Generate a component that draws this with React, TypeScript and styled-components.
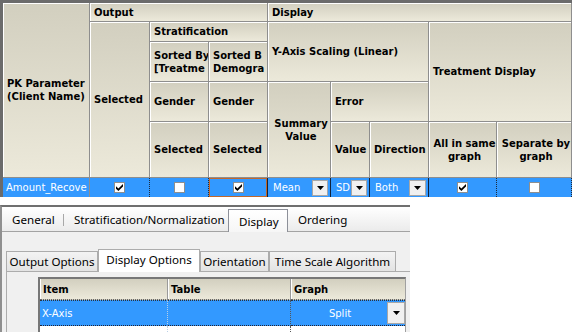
import React from 'react';
import styled, { createGlobalStyle } from 'styled-components';

const Global = createGlobalStyle`
  html, body { margin: 0; padding: 0; background: #fff; overflow: hidden; }
  #root { width: 572px; height: 332px; }
`;

const Page = styled.div`
  width: 572px;
  height: 332px;
  overflow: hidden;
  display: flex;
  flex-direction: column;
  background: #fff;
`;

/* ---------- top grid ---------- */
const TopGrid = styled.div`
  display: grid;
  grid-template-columns: 87px 60px 59px 59px 63px 39px 59px 68px 75px;
  grid-template-rows: 19px 20px 40px 40px 56px 19px;
  border-top: 3px solid #6b6b6b;
  border-left: 3px solid #6b6b6b;
  font-family: "DejaVu Sans", Verdana, sans-serif;
  font-size: 10px;
  flex: none;
`;

const HeadCell = styled.div<{ $col: string; $row: string; $center?: boolean }>`
  grid-column: ${p => p.$col};
  grid-row: ${p => p.$row};
  box-sizing: border-box;
  min-width: 0;
  background: linear-gradient(#d2cfbf, #ece9da);
  border-right: 1px solid #8e8e8e;
  border-bottom: 1px solid #8e8e8e;
  box-shadow: inset 1px 1px 0 #fff;
  display: flex;
  align-items: center;
  justify-content: ${p => (p.$center ? 'center' : 'flex-start')};
  text-align: ${p => (p.$center ? 'center' : 'left')};
  padding: 0 0 0 4px;
  font-weight: bold;
  line-height: 13px;
  color: #000;
  white-space: nowrap;
  overflow: hidden;
`;

type Edge = 'gray' | 'dot' | 'solid';
const edgeStyle = (e: Edge) =>
  e === 'gray' ? '1px solid #8e8e8e' : e === 'dot' ? '1px dotted #1c2a3a' : '1px solid #10223a';

const DataCell = styled.div<{ $col: number; $edge: Edge; $center?: boolean; $focus?: boolean }>`
  grid-row: 6;
  grid-column: ${p => p.$col};
  box-sizing: border-box;
  min-width: 0;
  background: #3399ff;
  color: #fff;
  border-right: ${p => edgeStyle(p.$edge)};
  display: flex;
  align-items: center;
  justify-content: ${p => (p.$center ? 'center' : 'flex-start')};
  padding: ${p => (p.$center ? '0 2px' : '0 2px 0 5px')};
  white-space: nowrap;
  overflow: hidden;
  ${p => (p.$focus ? 'box-shadow: inset 0 0 0 1px #c2682c;' : '')}
`;

const NameCell = styled(DataCell)`
  padding-left: 3px;
`;

const Box = styled.span`
  width: 11px;
  height: 11px;
  box-sizing: border-box;
  border: 1px solid #8e8f8f;
  background: #fff;
  display: inline-flex;
  align-items: center;
  justify-content: center;
`;

const DropBtn = styled.span<{ $w: number; $h: number }>`
  width: ${p => p.$w}px;
  height: ${p => p.$h}px;
  box-sizing: border-box;
  border: 1px solid #a7a7a7;
  background: #f0f0f0;
  display: flex;
  align-items: center;
  justify-content: center;
  margin-left: auto;
  flex: none;
`;

const Check = ({ on }: { on: boolean }) => (
  <Box>
    {on && (
      <svg width="7" height="7" viewBox="0 0 7 7">
        <polygon points="0,2.3 2.4,4.6 7,0 7,2.4 2.4,7 0,4.7" fill="#000" />
      </svg>
    )}
  </Box>
);

const Arrow = () => (
  <svg width="7" height="4" viewBox="0 0 7 4">
    <polygon points="0,0 7,0 3.5,4" fill="#000" />
  </svg>
);

/* ---------- tab control ---------- */
const TabControl = styled.div`
  margin-top: 8px;
  width: 408px;
  flex: 1;
  display: flex;
  flex-direction: column;
  border-top: 2px solid #6f6f6f;
  border-left: 2px solid #8f8f8f;
  background: #f0f0f0;
  font-family: "Noto Sans", "Segoe UI", sans-serif;
  font-size: 11.6px;
  color: #000;
`;

const TabStrip = styled.div`
  height: 24px;
  display: flex;
  align-items: stretch;
  background: linear-gradient(#ffffff, #ebebeb);
  border-bottom: 1px solid #a3a3a3;
  flex: none;
`;

const Tab = styled.div<{ $w: number; $active?: boolean }>`
  width: ${p => p.$w}px;
  box-sizing: border-box;
  padding-left: 10px;
  display: flex;
  align-items: center;
  white-space: nowrap;
  ${p =>
    p.$active
      ? `margin-top: 2px; margin-bottom: -1px; border: 1px solid #8d9099; border-bottom: none; background: linear-gradient(#ffffff, #f6f6f6);`
      : ''}
`;

const TabSep = styled.span`
  width: 1px;
  height: 12px;
  align-self: center;
  margin-top: 2px;
  background: #a8a8a8;
  flex: none;
`;

const TabPanel = styled.div`
  flex: 1;
  display: flex;
  flex-direction: column;
  padding: 17px 0 0 4px;
  min-height: 0;
`;

const InnerStrip = styled.div`
  height: 22px;
  display: flex;
  align-items: flex-end;
  flex: none;
`;

const InnerTab = styled.div<{ $w: number; $active?: boolean }>`
  width: ${p => p.$w}px;
  height: ${p => (p.$active ? 23 : 20)}px;
  box-sizing: border-box;
  border: 1px solid #acacac;
  border-bottom: none;
  display: flex;
  align-items: center;
  justify-content: center;
  white-space: nowrap;
  background: ${p => (p.$active ? '#ffffff' : 'linear-gradient(#f3f3f3, #e3e3e3)')};
  margin-bottom: ${p => (p.$active ? '-1px' : '0')};
  padding-bottom: ${p => (p.$active ? 3 : 0)}px;
  z-index: ${p => (p.$active ? 1 : 0)};
`;

const InnerPanel = styled.div`
  flex: 1;
  border-top: 1px solid #acacac;
  border-left: 1px solid #acacac;
  padding: 5px 0 0 31px;
  background: #f0f0f0;
`;

const ItemGrid = styled.div`
  width: 368px;
  box-sizing: border-box;
  display: grid;
  grid-template-columns: 128px 123px 114px;
  grid-template-rows: 21px 26px 30px;
  border-top: 2px solid #777;
  border-left: 2px solid #777;
  border-right: 1px solid #a0a0a0;
  background: #fff;
  font-family: "DejaVu Sans", Verdana, sans-serif;
  font-size: 10px;
`;

const GHead = styled.div<{ $last?: boolean }>`
  background: linear-gradient(#d2cfbf, #ece9da);
  border-right: ${p => (p.$last ? 'none' : '1px solid #9a9a9a')};
  box-shadow: inset 1px 0 0 #fff;
  border-bottom: 1px dotted #6a6a6a;
  display: flex;
  align-items: center;
  padding-left: 3px;
  font-weight: bold;
  box-sizing: border-box;
`;

const GCell = styled.div<{ $sel?: boolean; $sep: 'light' | 'dark' | 'none' }>`
  box-sizing: border-box;
  background: ${p => (p.$sel ? '#3399ff' : '#fff')};
  color: #fff;
  border-right: ${p =>
    p.$sep === 'none' ? 'none' : p.$sep === 'light' ? '1px dotted #b9cfe6' : '1px dotted #555'};
  ${p => (p.$sel ? 'border-bottom: 1px dotted #223; border-top: 1px dotted #2a3340;' : '')}
  display: flex;
  align-items: center;
  padding-left: 2px;
  min-width: 0;
`;

const CellText = styled.span<{ $grow?: boolean }>`
  flex: ${p => (p.$grow ? 1 : 'none')};
  text-align: ${p => (p.$grow ? 'center' : 'left')};
`;

export default function App() {
  return (
    <Page>
      <Global />
      <TopGrid>
        <HeadCell $col="1" $row="1 / span 5">PK Parameter<br />(Client Name)</HeadCell>
        <HeadCell $col="2 / span 3" $row="1">Output</HeadCell>
        <HeadCell $col="2" $row="2 / span 4">Selected</HeadCell>
        <HeadCell $col="3 / span 2" $row="2">Stratification</HeadCell>
        <HeadCell $col="3" $row="3">Sorted By<br />[Treatme</HeadCell>
        <HeadCell $col="4" $row="3">Sorted B<br />Demogra</HeadCell>
        <HeadCell $col="3" $row="4">Gender</HeadCell>
        <HeadCell $col="4" $row="4">Gender</HeadCell>
        <HeadCell $col="3" $row="5">Selected</HeadCell>
        <HeadCell $col="4" $row="5">Selected</HeadCell>
        <HeadCell $col="5 / span 5" $row="1">Display</HeadCell>
        <HeadCell $col="5 / span 3" $row="2 / span 2">Y-Axis Scaling (Linear)</HeadCell>
        <HeadCell $col="8 / span 2" $row="2 / span 3">Treatment Display</HeadCell>
        <HeadCell $col="5" $row="4 / span 2" $center>Summary<br />Value</HeadCell>
        <HeadCell $col="6 / span 2" $row="4">Error</HeadCell>
        <HeadCell $col="6" $row="5">Value</HeadCell>
        <HeadCell $col="7" $row="5">Direction</HeadCell>
        <HeadCell $col="8" $row="5" $center>All in same<br />graph</HeadCell>
        <HeadCell $col="9" $row="5" $center>Separate by<br />graph</HeadCell>

        <NameCell $col={1} $edge="gray">Amount_Recove</NameCell>
        <DataCell $col={2} $edge="dot" $center><Check on /></DataCell>
        <DataCell $col={3} $edge="dot" $center><Check on={false} /></DataCell>
        <DataCell $col={4} $edge="solid" $center $focus><Check on /></DataCell>
        <DataCell $col={5} $edge="solid">
          <CellText>Mean</CellText>
          <DropBtn $w={16} $h={16}><Arrow /></DropBtn>
        </DataCell>
        <DataCell $col={6} $edge="solid">
          <CellText>SD</CellText>
          <DropBtn $w={16} $h={16}><Arrow /></DropBtn>
        </DataCell>
        <DataCell $col={7} $edge="solid">
          <CellText>Both</CellText>
          <DropBtn $w={17} $h={16}><Arrow /></DropBtn>
        </DataCell>
        <DataCell $col={8} $edge="dot" $center><Check on /></DataCell>
        <DataCell $col={9} $edge="dot" $center><Check on={false} /></DataCell>
      </TopGrid>

      <TabControl>
        <TabStrip>
          <Tab $w={61}>General</Tab>
          <TabSep />
          <Tab $w={164}>Stratification/Normalization</Tab>
          <Tab $w={60} $active>Display</Tab>
          <Tab $w={70}>Ordering</Tab>
        </TabStrip>
        <TabPanel>
          <InnerStrip>
            <InnerTab $w={92}>Output Options</InnerTab>
            <InnerTab $w={102} $active>Display Options</InnerTab>
            <InnerTab $w={69}>Orientation</InnerTab>
            <InnerTab $w={127}>Time Scale Algorithm</InnerTab>
          </InnerStrip>
          <InnerPanel>
            <ItemGrid>
              <GHead>Item</GHead>
              <GHead>Table</GHead>
              <GHead $last>Graph</GHead>
              <GCell $sel $sep="light">X-Axis</GCell>
              <GCell $sel $sep="dark"></GCell>
              <GCell $sel $sep="none">
                <CellText $grow>Split</CellText>
                <DropBtn $w={18} $h={22}><Arrow /></DropBtn>
              </GCell>
              <GCell $sep="light"></GCell>
              <GCell $sep="dark"></GCell>
              <GCell $sep="none"></GCell>
            </ItemGrid>
          </InnerPanel>
        </TabPanel>
      </TabControl>
    </Page>
  );
}
